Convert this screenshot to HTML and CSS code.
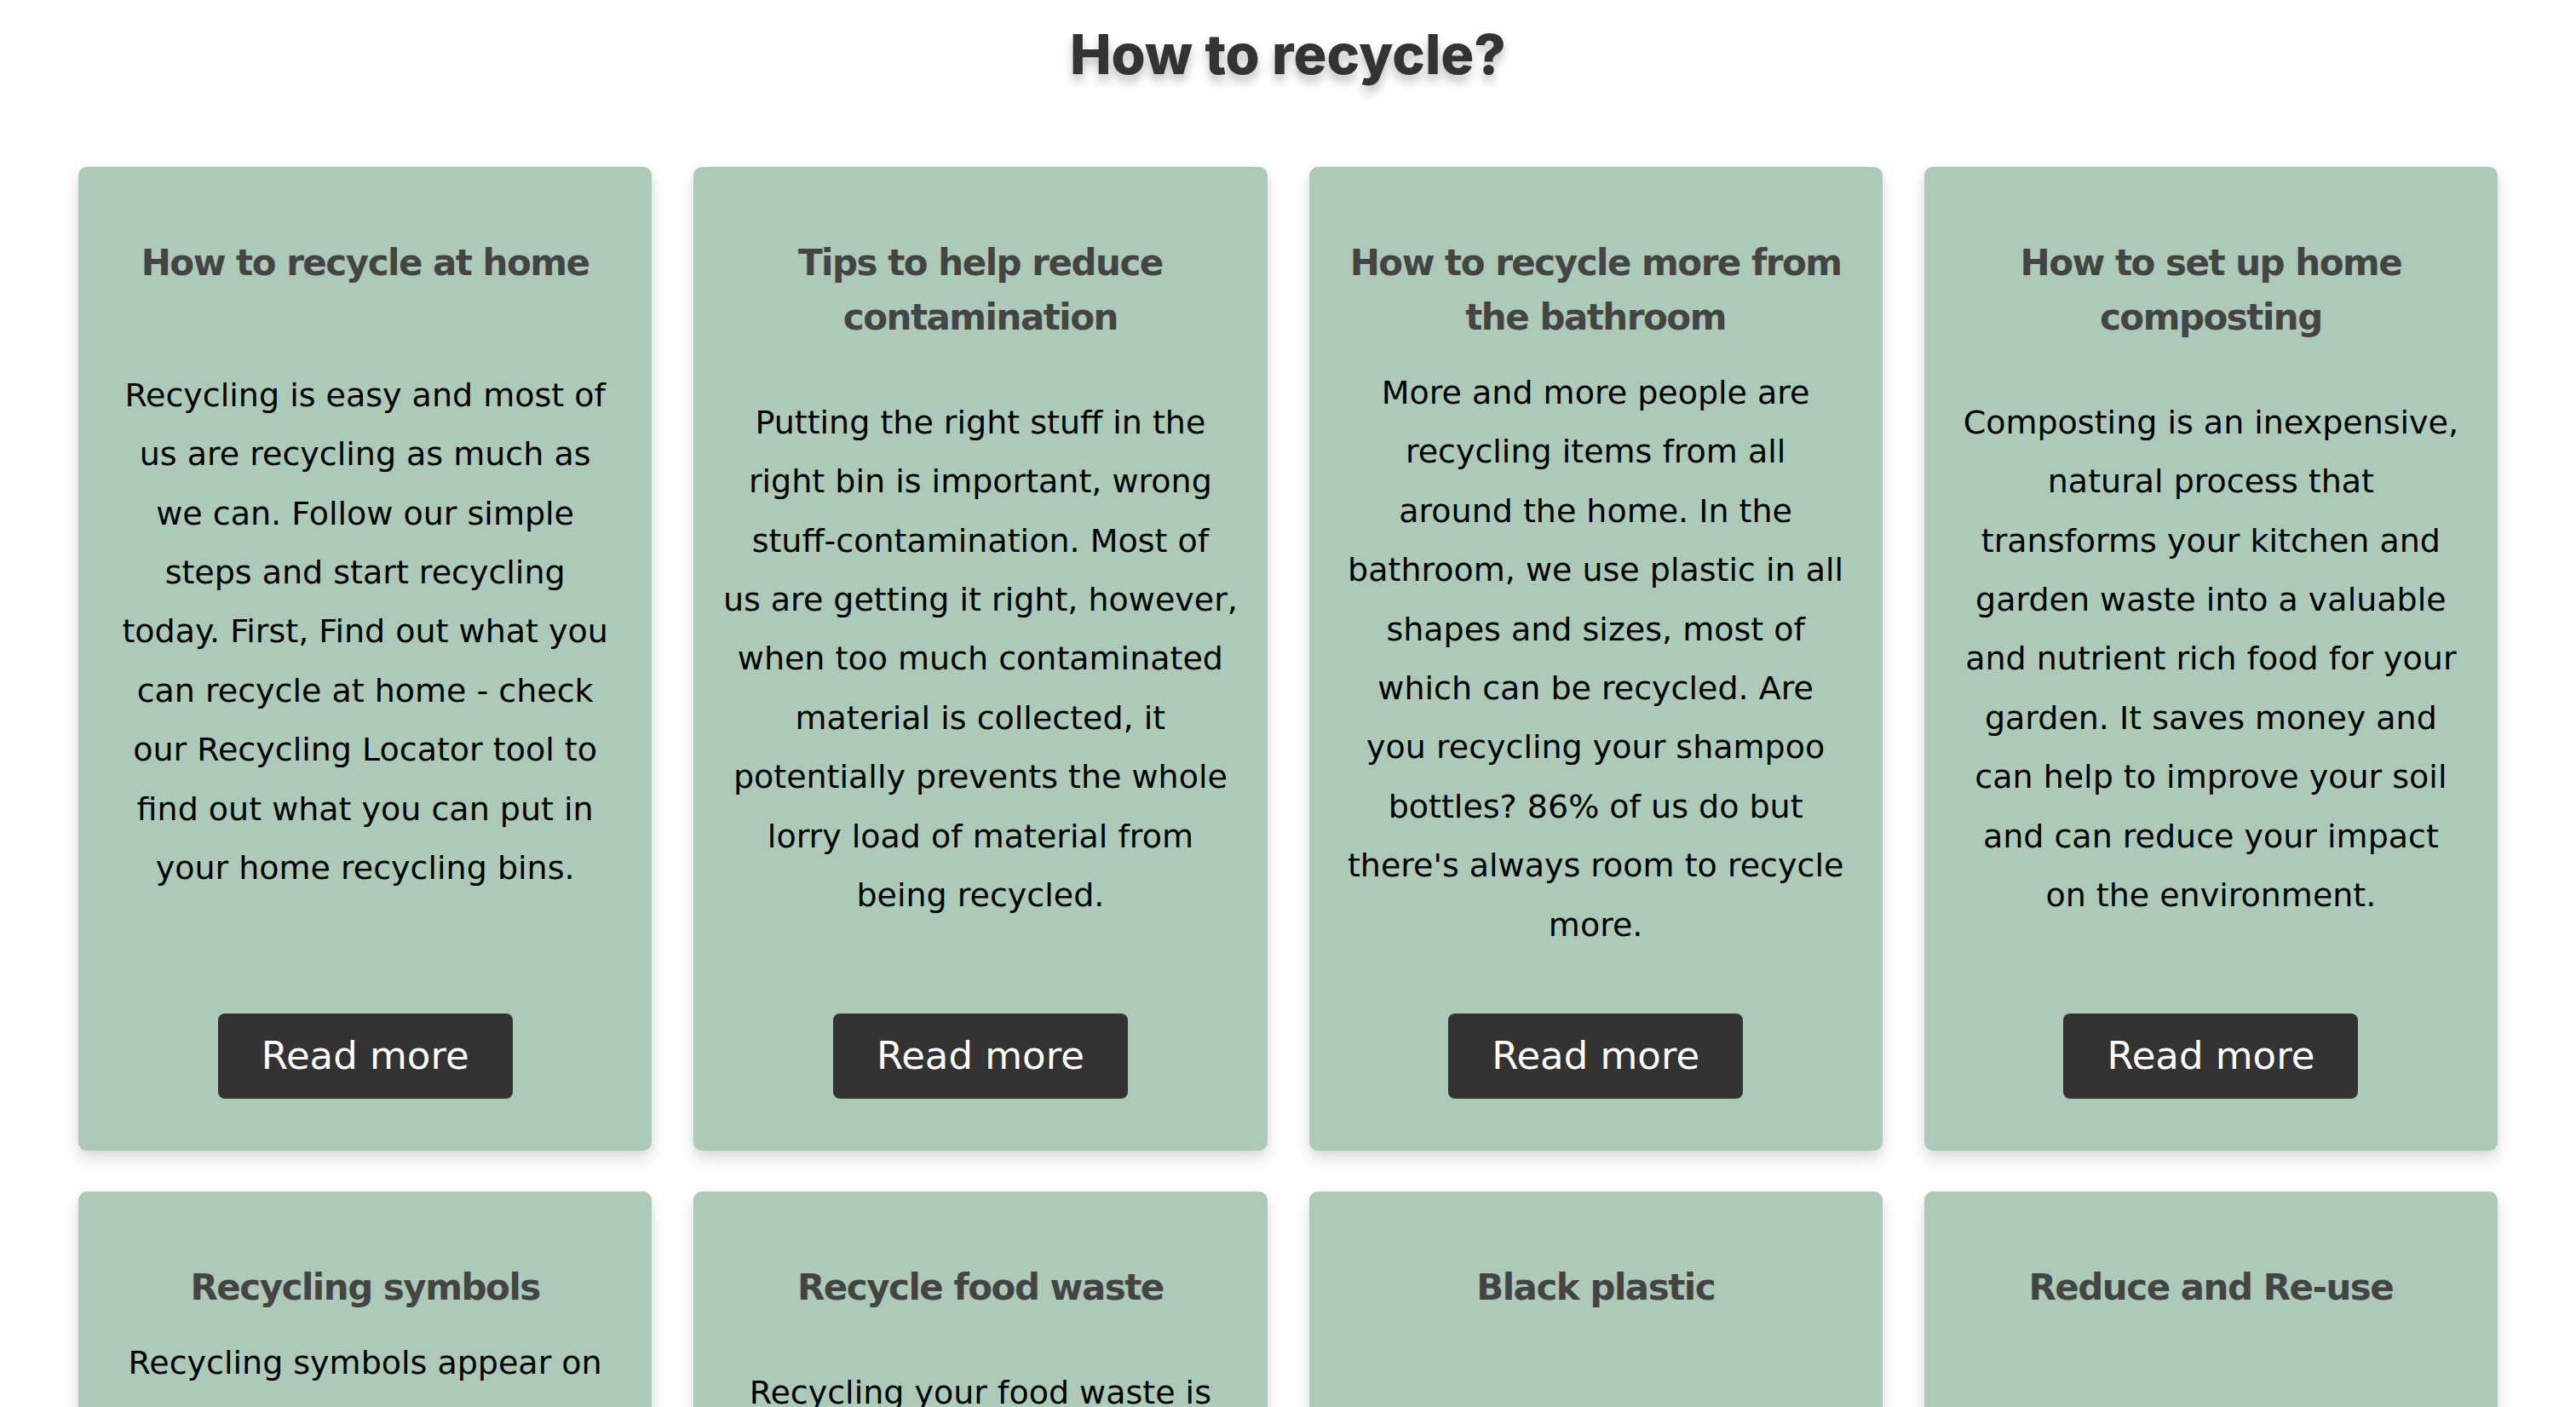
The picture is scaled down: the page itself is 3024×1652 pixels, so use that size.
FILE: index.html
```html
<!DOCTYPE html>
<html>
<head>
    <title>How to recycle?</title>
    <link rel="stylesheet" href="styles.css">
</head>
<body>
    <h1 class="page-title">How to recycle?</h1>

    <div class="guides">
        <div class="guide">
            <h2 class="guide-title">How to recycle at home</h2>
            <p class="guide-text">Recycling is easy and most of<br>us are recycling as much as<br>we can. Follow our simple<br>steps and start recycling<br>today. First, Find out what you<br>can recycle at home - check<br>our Recycling Locator tool to<br>find out what you can put in<br>your home recycling bins.</p>
            <a class="read-more" href="#">Read more</a>
        </div>
        <div class="guide">
            <h2 class="guide-title">Tips to help reduce contamination</h2>
            <p class="guide-text">Putting the right stuff in the<br>right bin is important, wrong<br>stuff-contamination. Most of<br>us are getting it right, however,<br>when too much contaminated<br>material is collected, it<br>potentially prevents the whole<br>lorry load of material from<br>being recycled.</p>
            <a class="read-more" href="#">Read more</a>
        </div>
        <div class="guide">
            <h2 class="guide-title">How to recycle more from the bathroom</h2>
            <p class="guide-text">More and more people are<br>recycling items from all<br>around the home. In the<br>bathroom, we use plastic in all<br>shapes and sizes, most of<br>which can be recycled. Are<br>you recycling your shampoo<br>bottles? 86% of us do but<br>there's always room to recycle<br>more.</p>
            <a class="read-more" href="#">Read more</a>
        </div>
        <div class="guide">
            <h2 class="guide-title">How to set up home composting</h2>
            <p class="guide-text">Composting is an inexpensive,<br>natural process that<br>transforms your kitchen and<br>garden waste into a valuable<br>and nutrient rich food for your<br>garden. It saves money and<br>can help to improve your soil<br>and can reduce your impact<br>on the environment.</p>
            <a class="read-more" href="#">Read more</a>
        </div>

        <div class="guide">
            <h2 class="guide-title">Recycling symbols</h2>
            <p class="guide-text">Recycling symbols appear on<br>packaging to show if an item<br>can be recycled or not. With<br>so many symbols out there,<br>it can get confusing. Find<br>out what the most common<br>symbols mean and look out<br>for them when you shop.</p>
            <a class="read-more" href="#">Read more</a>
        </div>
        <div class="guide">
            <h2 class="guide-title">Recycle food waste</h2>
            <p class="guide-text">Recycling your food waste is<br>one of the easiest ways to<br>help the planet. Recycled<br>food waste is turned into<br>compost and energy. Find<br>out how to recycle food<br>waste at home.</p>
            <a class="read-more" href="#">Read more</a>
        </div>
        <div class="guide">
            <h2 class="guide-title">Black plastic</h2>
            <p class="guide-text">Black plastic packaging has<br>been hard to recycle as<br>sorting machines can't spot<br>it. Find out which black<br>plastic can be recycled in<br>your local area.</p>
            <a class="read-more" href="#">Read more</a>
        </div>
        <div class="guide">
            <h2 class="guide-title">Reduce and Re-use</h2>
            <p class="guide-text">Recycling is great, but<br>reducing and re-using are<br>even better. Find out how<br>small changes to the way<br>you shop can cut down<br>your household waste.</p>
            <a class="read-more" href="#">Read more</a>
        </div>
    </div>
</body>
</html>
```

FILE: styles.css
```css
body {
    margin: 0;
    background: #fff;
    font-family: 'DejaVu Sans', 'Noto Sans', sans-serif;
}
.page-title {
    margin: 25px 0 93px;
    font-family: 'Inter', 'Liberation Sans', sans-serif;
    font-size: 65px;
    font-weight: 800;
    line-height: 78px;
    text-align: center;
    color: #333;
    text-shadow: 0 8px 12px rgba(0, 0, 0, 0.25);
}
.guides {
    display: grid;
    grid-template-columns: repeat(4, 1fr);
    column-gap: 49px;
    row-gap: 48px;
    padding: 0 92px 60px;
}
.guide {
    display: flex;
    flex-direction: column;
    justify-content: space-between;
    padding: 81px 30px 61px;
    background: #adc9b7;
    border-radius: 10px;
    box-shadow: 0 10px 20px rgba(0, 0, 0, 0.13), 0 2px 8px rgba(0, 0, 0, 0.06);
    text-align: center;
}
.guide-title {
    margin: 0 0 22px;
    padding: 0 9px;
    font-size: 42px;
    font-weight: 700;
    line-height: 64px;
    letter-spacing: -1.5px;
    color: #444;
}
.guide-text {
    margin: 0 0 69px;
    font-size: 38px;
    line-height: 69.4px;
    color: #000;
}
.read-more {
    align-self: center;
    padding: 26px 51px;
    font-size: 45px;
    line-height: 48px;
    color: #fff;
    background: #333;
    border-radius: 8px;
    text-decoration: none;
}
```
